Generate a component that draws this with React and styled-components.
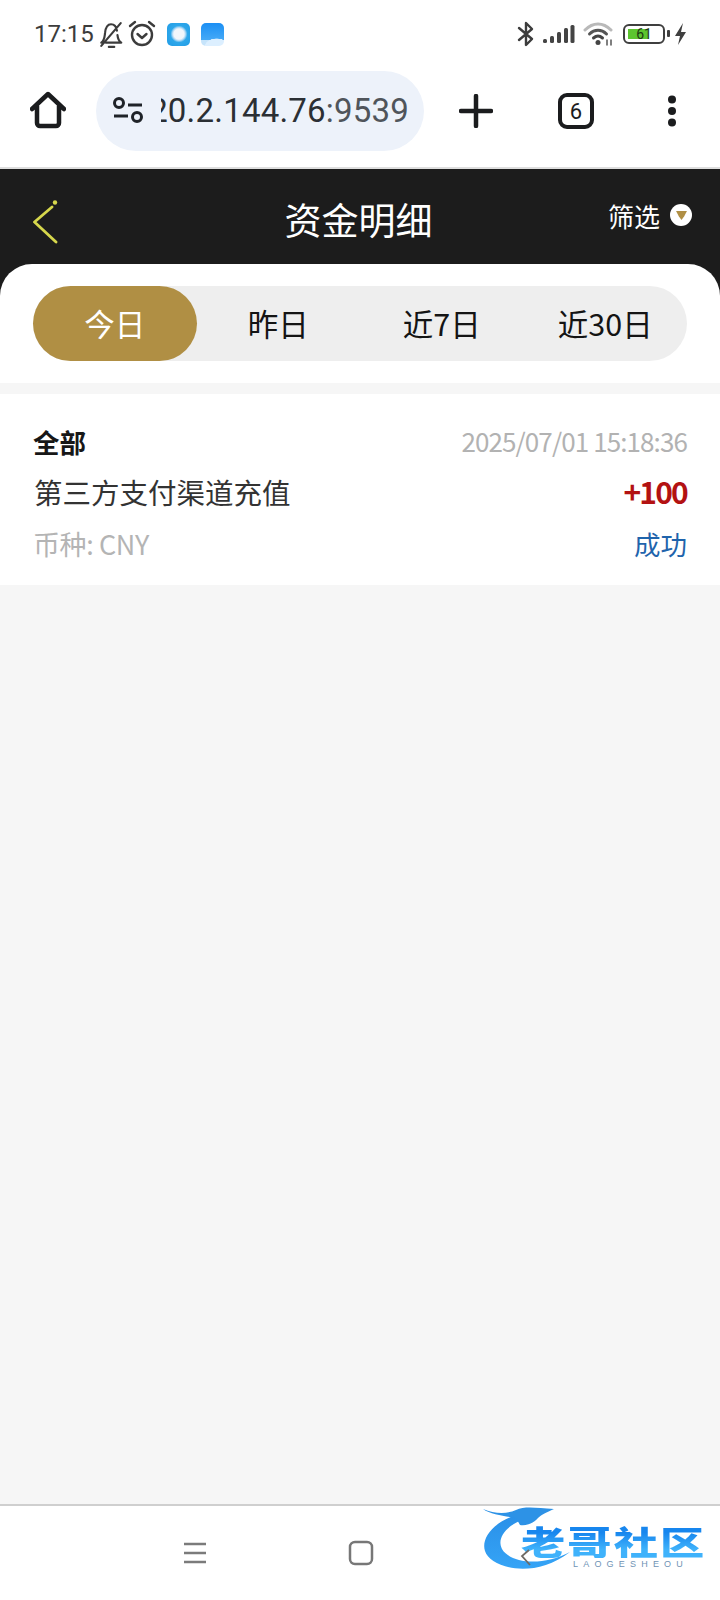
import React from "react";
import styled, { createGlobalStyle } from "styled-components";

const CJK = `"Noto Sans CJK SC", "Noto Sans", sans-serif`;

const Global = createGlobalStyle`
  html, body { margin: 0; padding: 0; background: #fff; }
  * { box-sizing: border-box; }
`;

const Page = styled.div`
  position: relative;
  width: 720px;
  height: 1600px;
  overflow: hidden;
  display: flex;
  flex-direction: column;
  background: #f6f6f6;
  font-family: ${CJK};
`;

/* ---------- status bar ---------- */
const StatusBar = styled.div`
  height: 68px;
  flex: none;
  background: #fff;
  display: flex;
  align-items: center;
  justify-content: space-between;
  padding: 0 33px 0 34px;
`;
const StatusGroup = styled.div`
  display: flex;
  align-items: center;
  gap: ${(p) => p.$gap || 8}px;
`;
const Clock = styled.span`
  font-family: Roboto, sans-serif;
  font-size: 24px;
  line-height: 30px;
  color: #3c3c3c;
`;
const AppIcon = styled.div`
  width: 23px;
  height: 23px;
  border-radius: 5px;
  margin-left: ${(p) => p.$ml || 0}px;
  background: ${(p) => p.$bg};
`;
const Battery = styled.div`
  position: relative;
  width: 42px;
  height: 20px;
  border: 2.5px solid #3f3f3f;
  border-radius: 6px;
  padding: 3px;
  margin-left: 2px;
  margin-right: 1px;
  &::after {
    content: "";
    position: absolute;
    right: -7px;
    top: 4px;
    width: 3px;
    height: 7px;
    border-radius: 1px;
    background: #3f3f3f;
  }
`;
const BatteryFill = styled.div`
  width: 61%;
  height: 100%;
  background: #5cc52f;
`;
const BatteryText = styled.span`
  position: absolute;
  inset: 0;
  display: flex;
  align-items: center;
  justify-content: center;
  font-family: Roboto, sans-serif;
  font-size: 14px;
  line-height: 15px;
  color: #1d3a12;
`;

/* ---------- browser toolbar ---------- */
const Toolbar = styled.div`
  height: 99px;
  flex: none;
  background: #fff;
  display: flex;
  align-items: flex-start;
  padding: 3px 0 0 30px;
`;
const UrlPill = styled.div`
  width: 328px;
  height: 80px;
  margin-left: 30px;
  border-radius: 40px;
  background: #edf2fa;
  display: flex;
  align-items: center;
  padding: 0 14px 0 17px;
`;
const UrlClip = styled.div`
  width: 248px;
  margin-left: 18px;
  overflow: hidden;
  display: flex;
  justify-content: flex-end;
  white-space: nowrap;
  font-family: Roboto, sans-serif;
  font-size: 33px;
  line-height: 40px;
  letter-spacing: 0.2px;
  color: #2b2f34;
`;
const UrlPort = styled.span`
  color: #50555b;
`;
const ToolbarSlot = styled.div`
  height: 80px;
  display: flex;
  align-items: center;
  justify-content: center;
  margin-left: ${(p) => p.$ml}px;
  width: ${(p) => p.$w}px;
`;
const TabCount = styled.div`
  width: 36px;
  height: 36px;
  border: 4px solid #1b1c1e;
  border-radius: 9px;
  display: flex;
  align-items: center;
  justify-content: center;
  font-family: Roboto, sans-serif;
  font-size: 22px;
  color: #1b1c1e;
`;
const ToolbarRule = styled.div`
  height: 2px;
  flex: none;
  background: #dedede;
`;

/* ---------- dark header and tabs ---------- */
const DarkShell = styled.div`
  flex: none;
  background: #1c1c1c;
`;
const Header = styled.div`
  height: 95px;
  display: grid;
  grid-template-columns: 1fr auto 1fr;
  padding: 0 36px 0 33px;
`;
const BackButton = styled.div`
  padding-top: 31px;
`;
const Title = styled.h1`
  margin: 0;
  padding-top: 23px;
  font-size: 37px;
  font-weight: 400;
  line-height: 54px;
  color: #fff;
`;
const FilterButton = styled.div`
  justify-self: end;
  margin-right: -8px;
  display: flex;
  align-items: flex-start;
  gap: 10px;
  padding-top: 27px;
  font-size: 26px;
  line-height: 40px;
  color: #fff;
`;
const FilterDot = styled.div`
  width: 22px;
  height: 22px;
  margin-top: 8px;
  border-radius: 50%;
  background: #fff;
  display: flex;
  align-items: center;
  justify-content: center;
`;
const TabCard = styled.div`
  background: #fff;
  border-radius: 32px 32px 0 0;
  padding: 22px 33px;
`;
const TabTrack = styled.div`
  height: 75px;
  border-radius: 38px;
  background: #eeeeee;
  display: grid;
  grid-template-columns: repeat(4, 1fr);
`;
const Tab = styled.div`
  border-radius: 38px;
  display: flex;
  align-items: center;
  justify-content: center;
  padding-bottom: 2px;
  font-size: 30.5px;
  color: ${(p) => (p.$active ? "#fff" : "#141414")};
  background: ${(p) => (p.$active ? "#b08f44" : "transparent")};
`;

/* ---------- record ---------- */
const Record = styled.div`
  flex: none;
  margin-top: 11px;
  background: #fff;
  padding: 27px 33px 20px 34px;
  display: flex;
  flex-direction: column;
  gap: 9px;
`;
const Row = styled.div`
  display: flex;
  align-items: center;
  justify-content: space-between;
  height: ${(p) => p.$h}px;
`;
const Kind = styled.span`
  margin-left: -1px;
  font-size: 26.5px;
  font-weight: 700;
  color: #171717;
`;
const Stamp = styled.span`
  padding-bottom: 2px;
  font-size: 26px;
  color: #b2b2b2;
  letter-spacing: -0.9px;
`;
const Desc = styled.span`
  font-size: 28.5px;
  color: #333;
`;
const Amount = styled.span`
  font-size: 30px;
  font-weight: 700;
  color: #b31212;
  letter-spacing: -1.8px;
`;
const Currency = styled.span`
  margin-left: -1px;
  font-size: 27px;
  color: #b4b4b4;
  letter-spacing: -0.4px;
`;
const State = styled.span`
  font-size: 26.5px;
  color: #1f64ac;
`;

const Filler = styled.div`
  flex: 1;
`;

/* ---------- nav bar ---------- */
const NavBar = styled.div`
  flex: none;
  height: 96px;
  background: #fff;
  border-top: 2px solid #cfcfcf;
  display: flex;
  align-items: flex-start;
  justify-content: center;
  padding: 34px 0 0 2px;
`;
const NavSlot = styled.div`
  width: 166px;
  height: 26px;
  display: flex;
  align-items: center;
  justify-content: center;
`;

/* ---------- watermark ---------- */
const Watermark = styled.div`
  position: absolute;
  left: 482px;
  top: 1505px;
  width: 230px;
  height: 70px;
`;
const WatermarkArt = styled.svg`
  position: absolute;
  left: 0;
  top: 0;
`;
const WatermarkTitle = styled.span`
  position: absolute;
  left: 39px;
  top: 19px;
  font-size: 33px;
  font-weight: 900;
  line-height: 34px;
  letter-spacing: 1.6px;
  white-space: nowrap;
  transform: scaleX(1.34);
  transform-origin: left center;
  background: linear-gradient(180deg, #1786ee 25%, #3fb2fb 75%);
  -webkit-background-clip: text;
  background-clip: text;
  color: transparent;
`;
const WatermarkSub = styled.span`
  position: absolute;
  left: 91px;
  top: 54px;
  font-family: "Liberation Sans", sans-serif;
  font-size: 9px;
  line-height: 10px;
  letter-spacing: 5.2px;
  white-space: nowrap;
  color: #6f93b5;
`;

const Stroke = ({ children, w = 24, h = 24, vb, sw = 2, color = "#3c3c3c", fill = "none" }) => (
  <svg width={w} height={h} viewBox={vb || `0 0 ${w} ${h}`} fill={fill} stroke={color} strokeWidth={sw} strokeLinecap="round" strokeLinejoin="round">
    {children}
  </svg>
);

const tabs = ["今日", "昨日", "近7日", "近30日"];

export default function App() {
  return (
    <Page>
      <Global />
      <StatusBar>
        <StatusGroup $gap={4}>
          <Clock>17:15</Clock>
          <Stroke w={26} h={27} vb="0 0 24 25" sw={2}>
            <path d="M3 20c3-2 3-5 3.500-9C7 6 9 3 12 3c3 0 5 2.500 5.500 6M18 13c.3 3 1.200 5.500 3.500 7H7M3 23 21 2" />
            <path d="M10 24h5" />
          </Stroke>
          <Stroke w={28} h={28} sw={2.4}>
            <circle cx="14" cy="15" r="10" />
            <path d="M9.500 14l4.500 4 4.500-4M2 6l5-4M26 6l-5-4" />
          </Stroke>
          <AppIcon $ml={7} $bg="radial-gradient(circle at 52% 48%, #f2f6fb 0 30%, #b9dcf6 38%, #2ea7ea 50%, #1f9be6 100%)" />
          <AppIcon $ml={7} $bg="radial-gradient(ellipse 70% 45% at 68% 100%, #dcefff 0 70%, transparent 74%), radial-gradient(ellipse 60% 35% at 20% 100%, #c6e4fb 0 75%, transparent 80%), linear-gradient(180deg, #1b8ff4, #54b3f8)" />
        </StatusGroup>
        <StatusGroup $gap={8}>
          <Stroke w={18} h={26} sw={2.4}>
            <path d="M2 7l13 11-6 6V2l6 6L2 19" />
          </Stroke>
          <svg width="32" height="20" viewBox="0 0 32 20" fill="#444">
            <rect x="0" y="15" width="4" height="4" rx="1.500" />
            <rect x="7" y="12" width="4" height="7" rx="1.500" />
            <rect x="14" y="8" width="4" height="11" rx="1.500" />
            <rect x="21" y="4" width="4" height="15" rx="1.500" />
            <rect x="27.500" y="1" width="4" height="18" rx="1.500" />
          </svg>
          <svg width="30" height="24" viewBox="0 0 30 24" fill="none" strokeLinecap="round">
            <path d="M2 8C10 0 20 0 28 8" stroke="#b9b9b9" strokeWidth="3" />
            <path d="M6.500 12C11.500 7 18.500 7 23.500 12" stroke="#555" strokeWidth="3" />
            <path d="M10.500 16c3-2.600 6-2.600 9 0" stroke="#444" strokeWidth="3" />
            <circle cx="15" cy="20.500" r="2.500" fill="#444" />
            <path d="M24 18v5M28 18v5" stroke="#555" strokeWidth="1.500" />
          </svg>
          <Battery>
            <BatteryFill />
            <BatteryText>61</BatteryText>
          </Battery>
          <svg width="13" height="24" viewBox="0 0 13 24" fill="#3f3f3f">
            <path d="M9 1 1 14h5l-2 9 8-13H7z" />
          </svg>
        </StatusGroup>
      </StatusBar>

      <Toolbar>
        <svg width="36" height="80" viewBox="0 0 36 80" fill="none" stroke="#1b1c1e" strokeWidth="4.500" strokeLinejoin="round" strokeLinecap="round">
          <path d="M2 38 18 23l16 15M7 35v17a3 3 0 0 0 3 3h16a3 3 0 0 0 3-3V35" />
        </svg>
        <UrlPill>
          <svg width="30" height="28" viewBox="0 0 30 28" fill="none" stroke="#1f2328" strokeWidth="3" style={{ flex: "none" }}>
            <circle cx="6" cy="6" r="4.500" />
            <path d="M15 8h14M1 19h14" />
            <circle cx="24" cy="20" r="4.500" />
          </svg>
          <UrlClip>
            <span>20.2.144.76<UrlPort>:9539</UrlPort></span>
          </UrlClip>
        </UrlPill>
        <ToolbarSlot $ml={28} $w={48}>
          <svg width="34" height="34" viewBox="0 0 34 34" stroke="#1b1c1e" strokeWidth="4.500" strokeLinecap="round">
            <path d="M17 2v30M2 17h30" />
          </svg>
        </ToolbarSlot>
        <ToolbarSlot $ml={52} $w={48}>
          <TabCount>6</TabCount>
        </ToolbarSlot>
        <ToolbarSlot $ml={60} $w={24}>
          <svg width="10" height="32" viewBox="0 0 10 32" fill="#1b1c1e">
            <circle cx="5" cy="4.500" r="4" />
            <circle cx="5" cy="16" r="4" />
            <circle cx="5" cy="27.500" r="4" />
          </svg>
        </ToolbarSlot>
      </Toolbar>
      <ToolbarRule />

      <DarkShell>
        <Header>
          <BackButton>
            <svg width="26" height="44" viewBox="0 0 26 44" fill="none" strokeLinecap="round">
              <path d="M19 7 1.500 22 23 42" stroke="#d6d74c" strokeWidth="2.800" strokeLinejoin="round" />
              <circle cx="22" cy="2.500" r="2.200" fill="#d6d74c" />
            </svg>
          </BackButton>
          <Title>资金明细</Title>
          <FilterButton>
            筛选
            <FilterDot>
              <svg width="11" height="10" viewBox="0 0 12 11" fill="#b08f44">
                <path d="M0 1h12L9 7 6 11 3 7z" />
              </svg>
            </FilterDot>
          </FilterButton>
        </Header>
        <TabCard>
          <TabTrack>
            {tabs.map((t, i) => (
              <Tab key={t} $active={i === 0}>{t}</Tab>
            ))}
          </TabTrack>
        </TabCard>
      </DarkShell>

      <Record>
        <Row $h={40}>
          <Kind>全部</Kind>
          <Stamp>2025/07/01 15:18:36</Stamp>
        </Row>
        <Row $h={42}>
          <Desc>第三方支付渠道充值</Desc>
          <Amount>+100</Amount>
        </Row>
        <Row $h={44}>
          <Currency>币种: CNY</Currency>
          <State>成功</State>
        </Row>
      </Record>

      <Filler />

      <NavBar>
        <NavSlot>
          <svg width="24" height="22" viewBox="0 0 24 22" stroke="#7b7b7b" strokeWidth="2.600">
            <path d="M1 2h22M1 11h22M1 20h22" />
          </svg>
        </NavSlot>
        <NavSlot>
          <svg width="26" height="26" viewBox="0 0 26 26" fill="none" stroke="#777" strokeWidth="2.500">
            <rect x="2" y="2" width="22" height="22" rx="5" />
          </svg>
        </NavSlot>
        <NavSlot />
      </NavBar>

      <Watermark>
        <WatermarkArt width="230" height="70" viewBox="0 0 230 70">
          <defs>
            <linearGradient id="arc" x1="0" y1="0" x2="0" y2="1">
              <stop offset="0" stopColor="#2a90e8" />
              <stop offset="1" stopColor="#35a4f6" />
            </linearGradient>
          </defs>
          <path d="M34 10C10 18-1 34 3 46c5 16 47 30 85 1-28 15-60 11-68-3-6-12 6-24 22-30z" fill="url(#arc)" />
          <path d="M1 4c12 5 24 5 33 1 9-4 20-2 38-1-8 4-12 5-16 9-5 6-13 8-18 7l-4-7C24 11 9 10 1 4z" fill="#2d92e6" />
        </WatermarkArt>
        <WatermarkTitle>老哥社区</WatermarkTitle>
        <WatermarkSub>LAOGESHEOU</WatermarkSub>
        <WatermarkArt width="230" height="70" viewBox="0 0 230 70">
          <path d="M47 45 40 51 48 60" fill="none" stroke="#6f6a64" strokeWidth="1.800" />
        </WatermarkArt>
      </Watermark>
    </Page>
  );
}
